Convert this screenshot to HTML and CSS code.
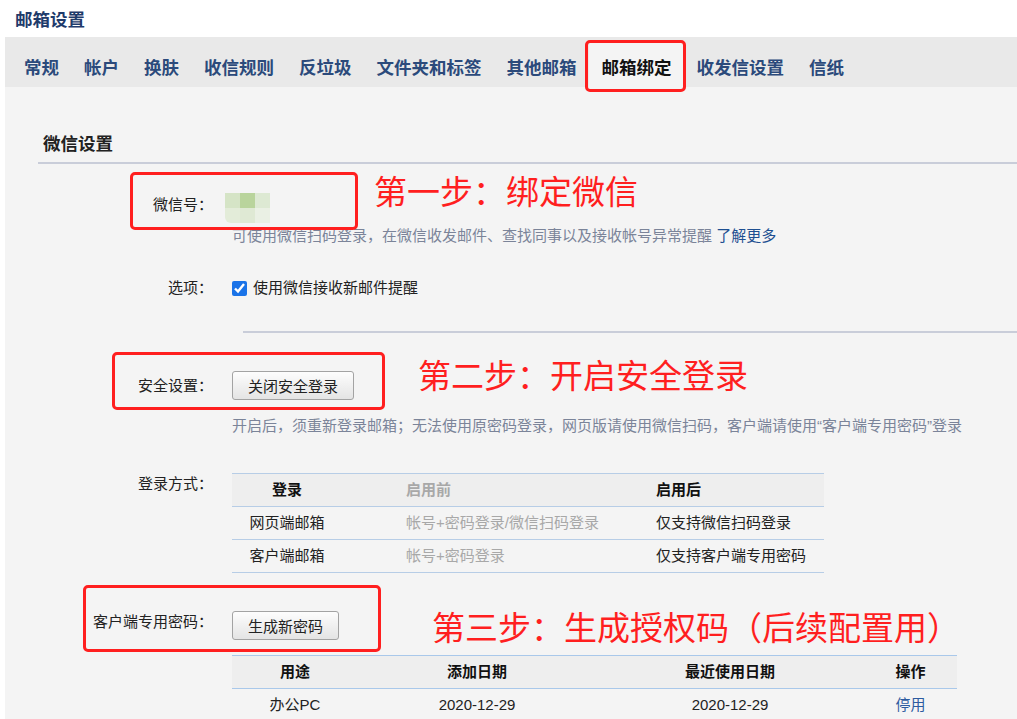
FILE: index.html
```html
<!DOCTYPE html>
<html lang="zh-CN">
<head>
    <meta charset="UTF-8">
    <title>邮箱设置</title>
    <link rel="stylesheet" href="styles.css">
</head>
<body>
    <div class="page-title">邮箱设置</div>

    <div class="tabs">
        <a class="tab">常规</a>
        <a class="tab">帐户</a>
        <a class="tab">换肤</a>
        <a class="tab">收信规则</a>
        <a class="tab">反垃圾</a>
        <a class="tab">文件夹和标签</a>
        <a class="tab">其他邮箱</a>
        <a class="tab active">邮箱绑定</a>
        <a class="tab">收发信设置</a>
        <a class="tab">信纸</a>
    </div>

    <div class="content">
        <h2 class="section-title">微信设置</h2>

        <div class="row row-wechat">
            <div class="row-label">微信号：</div>
            <div class="row-value">
                <div class="avatar">
                    <span class="px1"></span><span class="px2"></span><span class="px3"></span>
                    <span class="px4"></span><span class="px5"></span><span class="px6"></span>
                </div>
                <p class="tip">可使用微信扫码登录，在微信收发邮件、查找同事以及接收帐号异常提醒 <a class="link">了解更多</a></p>
            </div>
        </div>

        <div class="row row-option">
            <div class="row-label">选项：</div>
            <label class="row-value check">
                <input type="checkbox" checked>
                <span>使用微信接收新邮件提醒</span>
            </label>
        </div>

        <div class="divider"></div>

        <div class="row row-security">
            <div class="row-label">安全设置：</div>
            <div class="row-value">
                <button class="btn">关闭安全登录</button>
                <p class="tip tip-security">开启后，须重新登录邮箱；无法使用原密码登录，网页版请使用微信扫码，客户端请使用“客户端专用密码”登录</p>
            </div>
        </div>

        <div class="row row-login">
            <div class="row-label">登录方式：</div>
            <div class="row-value">
                <div class="login-table">
                    <div class="lt-row lt-head">
                        <div class="lt-c1">登录</div>
                        <div class="lt-c2 muted">启用前</div>
                        <div class="lt-c3">启用后</div>
                    </div>
                    <div class="lt-row">
                        <div class="lt-c1">网页端邮箱</div>
                        <div class="lt-c2 muted">帐号+密码登录/微信扫码登录</div>
                        <div class="lt-c3">仅支持微信扫码登录</div>
                    </div>
                    <div class="lt-row">
                        <div class="lt-c1">客户端邮箱</div>
                        <div class="lt-c2 muted">帐号+密码登录</div>
                        <div class="lt-c3">仅支持客户端专用密码</div>
                    </div>
                </div>
            </div>
        </div>

        <div class="row row-client">
            <div class="row-label">客户端专用密码：</div>
            <div class="row-value">
                <button class="btn">生成新密码</button>
                <div class="key-table">
                    <div class="kt-row kt-head">
                        <div>用途</div>
                        <div>添加日期</div>
                        <div>最近使用日期</div>
                        <div>操作</div>
                    </div>
                    <div class="kt-row">
                        <div>办公PC</div>
                        <div>2020-12-29</div>
                        <div>2020-12-29</div>
                        <div><a class="link-op">停用</a></div>
                    </div>
                </div>
            </div>
        </div>

        <!-- 标注 -->
        <div class="mark-box mark-1"></div>
        <div class="mark-text text-1">第一步：绑定微信</div>
        <div class="mark-box mark-2"></div>
        <div class="mark-text text-2">第二步：开启安全登录</div>
        <div class="mark-box mark-3"></div>
        <div class="mark-text text-3">第三步：生成授权码（后续配置用）</div>
    </div>
</body>
</html>
```

FILE: styles.css
```css
body {
    margin: 0;
    background: #fff;
    font-family: "Liberation Sans", "Noto Sans CJK SC", sans-serif;
    font-size: 15px;
    color: #222;
}

.page-title {
    height: 37px;
    line-height: 40px;
    padding-left: 15px;
    font-size: 17.5px;
    font-weight: bold;
    color: #1f3b6b;
}

.tabs {
    display: flex;
    margin-left: 5px;
    padding: 5px 0 0 6.5px;
    height: 45px;
    background: #e9e9e9;
}

.tab {
    position: relative;
    padding: 14px 12.5px 7px;
    line-height: 24px;
    font-size: 17.5px;
    font-weight: bold;
    color: #2b4a7b;
    white-space: nowrap;
}

.tab.active {
    background: #f4f4f4;
    color: #111;
}

.tab.active::after {
    content: "";
    position: absolute;
    top: -2px;
    left: -4px;
    right: -2px;
    bottom: -5px;
    border: 3px solid #ff1f1f;
    border-radius: 5px;
    z-index: 2;
}

.content {
    position: relative;
    margin-left: 5px;
    padding: 45px 0 40px;
    background: #f4f4f4;
}

.section-title {
    margin: 0 0 0 33px;
    padding: 0 5px 6px;
    line-height: 24px;
    font-size: 17.5px;
    font-weight: bold;
    color: #222;
    border-bottom: 2px solid #c9cdd9;
}

.row {
    display: grid;
    grid-template-columns: 208px 1fr;
    column-gap: 19px;
}

.row-label {
    text-align: right;
    line-height: 22px;
    white-space: nowrap;
}

.tip {
    margin: 0;
    line-height: 22px;
    color: #7b8499;
    white-space: nowrap;
}

.link {
    color: #1d4f91;
}

/* 微信号 */
.row-wechat {
    margin-top: 29px;
}

.row-wechat .row-label {
    line-height: 24px;
}

.avatar {
    display: grid;
    grid-template-columns: repeat(3, 15px);
    grid-auto-rows: 15px;
    width: 45px;
    margin-left: -7px;
    border-bottom-left-radius: 6px;
    overflow: hidden;
}

.px1 { background: #d5e4c6; }
.px2 { background: #b9d49c; }
.px3 { background: #dde9d3; }
.px4 { background: #e3ecd9; }
.px5 { background: #dfe9d4; }
.px6 { background: #eaf0e4; }

.row-wechat .tip {
    margin-top: 2px;
}

/* 选项 */
.row-option {
    margin-top: 29px;
}

.row-option .row-label {
    line-height: 24px;
}

.check {
    display: flex;
    align-items: center;
    line-height: 24px;
}

.check input {
    width: 15px;
    height: 15px;
    margin: 0 6px 0 0;
    accent-color: #1a73e8;
}

.divider {
    margin: 31px 0 0 238px;
    height: 2px;
    background: #c9cdd9;
}

/* 安全设置 */
.row-security {
    margin-top: 38px;
}

.row-security .row-label {
    line-height: 29px;
}

.btn {
    display: block;
    height: 29px;
    padding: 0 15px;
    font-family: inherit;
    font-size: 15px;
    color: #222;
    background: linear-gradient(#fdfdfd, #e4e4e4);
    border: 1px solid #a3a3a3;
    border-radius: 3px;
}

.tip-security {
    margin-top: 15px;
}

/* 登录方式 */
.row-login {
    margin-top: 36px;
}

.login-table {
    width: 592px;
    border-top: 1px solid #b7cde6;
}

.lt-row {
    display: grid;
    grid-template-columns: 110px 314px 1fr;
    height: 32px;
    line-height: 32px;
    border-bottom: 1px solid #b7cde6;
    white-space: nowrap;
}

.lt-head {
    background: #eeeeee;
    font-weight: bold;
    color: #111;
}

.lt-c1 {
    text-align: center;
}

.lt-c2 {
    padding-left: 64px;
}

.muted {
    color: #a8a8a8;
}

/* 客户端专用密码 */
.row-client {
    margin-top: 38px;
}

.key-table {
    width: 725px;
    margin-top: 15px;
    border-top: 1px solid #a9c8ea;
}

.kt-row {
    display: grid;
    grid-template-columns: 126px 238px 268px 1fr;
    height: 32px;
    line-height: 32px;
    text-align: center;
}

.kt-head {
    background: #eeeeee;
    font-weight: bold;
    color: #111;
    border-bottom: 1px solid #a9c8ea;
}

.link-op {
    color: #2d5ba0;
}

/* 红色标注 */
.mark-box {
    position: absolute;
    box-sizing: border-box;
    border: 3px solid #ff1f1f;
    border-radius: 5px;
}

.mark-1 { left: 125px; top: 85px; width: 228px; height: 58px; }
.mark-2 { left: 107px; top: 265px; width: 273px; height: 58px; }
.mark-3 { left: 78px; top: 498px; width: 298px; height: 67px; }

.mark-text {
    position: absolute;
    line-height: 40px;
    font-size: 33px;
    color: #ff1f1f;
    white-space: nowrap;
    font-family: "Noto Sans CJK SC", sans-serif;
}

.text-1 { left: 369px; top: 83px; }
.text-2 { left: 413px; top: 267px; }
.text-3 { left: 427px; top: 519px; }
```
